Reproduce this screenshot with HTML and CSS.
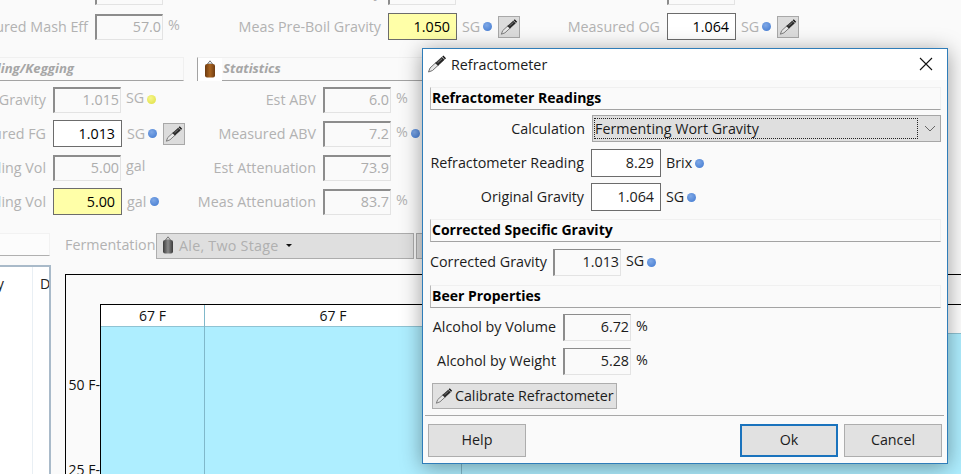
FILE: index.html
```html
<!DOCTYPE html>
<html lang="en">
<head>
<meta charset="utf-8">
<title>Refractometer</title>
<link rel="stylesheet" href="styles.css">
</head>
<body>
<svg class="defs" width="0" height="0" aria-hidden="true">
  <symbol id="refract" viewBox="0 0 20 20">
    <path d="M1.5 18 L3 14 L9 8.5 L11.5 11 L5.5 16.5 Z" fill="#e8e8e8" stroke="#707070" stroke-width="1"/>
    <path d="M8.5 9 L14.8 3.2 L17.3 5.7 L11 11.5 Z" fill="#262626" stroke="#111" stroke-width=".5"/>
    <path d="M10.5 8.8 L15 4.8" stroke="#8e8e8e" stroke-width=".9"/>
    <path d="M15.8 2 L18.5 4.7" stroke="#111" stroke-width="1.5"/>
  </symbol>
  <linearGradient id="brownfill" x1="0" x2="1" y1="0" y2="0">
    <stop offset="0" stop-color="#6b3a10"/><stop offset=".5" stop-color="#a96420"/><stop offset="1" stop-color="#6f3c12"/>
  </linearGradient>
  <linearGradient id="greyfill" x1="0" x2="1" y1="0" y2="0">
    <stop offset="0" stop-color="#3c3c3c"/><stop offset=".5" stop-color="#8a8a8a"/><stop offset="1" stop-color="#3c3c3c"/>
  </linearGradient>
  <symbol id="vessel" viewBox="0 0 12 18">
    <path d="M6 .8 L8.5 4 H3.5 Z" fill="none" stroke="#777" stroke-width="1"/>
    <rect x="1" y="4" width="10" height="13.5" rx="2"/>
  </symbol>
</svg>

<div class="app">
  <div class="bg">
    <div class="row-3">
      <div class="field"><span class="lab w88"></span><span class="inp off"></span></div>
      <div class="field"><span class="lab w81">Gravity</span><span class="inp off"></span></div>
      <div class="field"><span class="lab w81"></span><span class="inp off"></span></div>
    </div>
    <div class="row-3 row-second">
      <div class="field"><span class="lab w88">Measured Mash Eff</span><span class="inp off">57.0</span><span class="unit up">%</span></div>
      <div class="field"><span class="lab w81">Meas Pre-Boil Gravity</span><span class="inp on yellow">1.050</span><span class="unit">SG</span><i class="dot blue"></i><span class="tool"><svg class="ic18"><use href="#refract"/></svg></span></div>
      <div class="field"><span class="lab w81">Measured OG</span><span class="inp on">1.064</span><span class="unit">SG</span><i class="dot blue"></i><span class="tool"><svg class="ic18"><use href="#refract"/></svg></span></div>
    </div>

    <div class="stats">
      <div class="bg-head head-left">Bottling/Kegging</div>
      <div class="bg-head head-right"><span class="head-icon"><svg class="vessel-ic brown"><use href="#vessel"/></svg></span>Statistics</div>

      <div class="field"><span class="lab w46">Final Gravity</span><span class="inp off">1.015</span><span class="unit up">SG</span><i class="dot yellowdot"></i></div>
      <div class="field"><span class="lab w119">Est ABV</span><span class="inp off">6.0</span><span class="unit up">%</span></div>

      <div class="field"><span class="lab w46">Measured FG</span><span class="inp on">1.013</span><span class="unit">SG</span><i class="dot blue"></i><span class="tool"><svg class="ic18"><use href="#refract"/></svg></span></div>
      <div class="field"><span class="lab w119">Measured ABV</span><span class="inp off">7.2</span><span class="unit up">%</span><i class="dot blue"></i></div>

      <div class="field"><span class="lab w46">Est Bottling Vol</span><span class="inp off">5.00</span><span class="unit up">gal</span></div>
      <div class="field"><span class="lab w119">Est Attenuation</span><span class="inp off">73.9</span></div>

      <div class="field"><span class="lab w46">Bottling Vol</span><span class="inp on yellow">5.00</span><span class="unit">gal</span><i class="dot blue wide"></i></div>
      <div class="field"><span class="lab w119">Meas Attenuation</span><span class="inp off">83.7</span><span class="unit up">%</span></div>
    </div>

    <div class="ferm-row">
      <div class="stub"></div>
      <span class="ferm-label">Fermentation</span>
      <div class="ferm-select"><svg class="vessel-ic grey"><use href="#vessel"/></svg><span class="ferm-text">Ale, Two Stage</span><i class="caret"></i></div>
      <div class="ferm-btn"></div>
    </div>

    <div class="lower">
      <div class="table-stub">
        <div class="tcell c1"><span>Day</span></div>
        <div class="tcell c2">D</div>
      </div>
      <div class="chart">
        <div class="gutter"><div class="tick">50 F-</div><div class="tick">25 F-</div></div>
        <div class="plot">
          <div class="seg s1"><div class="seg-label">67 F</div><div class="seg-fill"></div></div>
          <div class="seg s2"><div class="seg-label">67 F</div><div class="seg-fill"></div></div>
          <div class="seg s3"><div class="seg-label tall"></div><div class="seg-fill"></div></div>
        </div>
      </div>
    </div>
  </div>

  <div class="dialog">
    <div class="titlebar">
      <svg class="ic20"><use href="#refract"/></svg>
      <span class="title">Refractometer</span>
      <svg class="close" viewBox="0 0 14 14"><path d="M1 1 L13 13 M13 1 L1 13" stroke="#111" stroke-width="1.1" fill="none"/></svg>
    </div>
    <div class="dbody">
      <div class="dhead">Refractometer Readings</div>
      <div class="drow calc-row">
        <span class="dlab w162">Calculation</span>
        <div class="dselect"><span class="focus">Fermenting Wort Gravity</span>
          <svg class="chev" viewBox="0 0 12 7"><path d="M1 1 L6 6 L11 1" fill="none" stroke="#666" stroke-width="1"/></svg>
        </div>
      </div>
      <div class="drow read-row">
        <span class="dlab w161">Refractometer Reading</span><span class="dinp">8.29</span><span class="dunit">Brix</span><i class="dot blue"></i>
      </div>
      <div class="drow og-row">
        <span class="dlab w161">Original Gravity</span><span class="dinp">1.064</span><span class="dunit">SG</span><i class="dot blue"></i>
      </div>
      <div class="dhead head2">Corrected Specific Gravity</div>
      <div class="drow corr-row">
        <span class="dlab w123">Corrected Gravity</span><span class="dinp sunk">1.013</span><span class="dunit up">SG</span><i class="dot blue"></i>
      </div>
      <div class="dhead head3">Beer Properties</div>
      <div class="drow abv-row">
        <span class="dlab w133">Alcohol by Volume</span><span class="dinp sunk">6.72</span><span class="dunit up">%</span>
      </div>
      <div class="drow abw-row">
        <span class="dlab w133">Alcohol by Weight</span><span class="dinp sunk">5.28</span><span class="dunit up">%</span>
      </div>
      <div class="calib"><svg class="ic18 calib-ic"><use href="#refract"/></svg>Calibrate Refractometer</div>
    </div>
    <div class="dfoot">
      <div class="btn">Help</div>
      <div class="spacer"></div>
      <div class="btn primary">Ok</div>
      <div class="btn">Cancel</div>
    </div>
  </div>
</div>
</body>
</html>
```

FILE: styles.css
```css
* { box-sizing: border-box; }
html, body { margin: 0; padding: 0; }
body { width: 961px; height: 474px; overflow: hidden; background: #fafafa; font-family: "Open Sans", "Noto Sans", "Liberation Sans", sans-serif; font-size: 14.3px; }
.defs { position: absolute; }
.app { position: relative; width: 961px; height: 474px; overflow: hidden; background: #fafafa; }
.bg { display: flex; flex-direction: column; margin-top: -22px; color: #b2b2b2; }

.row-3 { display: grid; grid-template-columns: 300px 279px 1fr; height: 27px; }
.row-second { margin-top: 8px; }
.field { display: flex; align-items: center; height: 27px; white-space: nowrap; }
.lab { display: flex; justify-content: flex-end; flex: none; margin-right: 7px; }
.w88 { width: 88px; }
.w81 { width: 81px; }
.w46 { width: 46px; }
.w119 { width: 119px; }
.inp { flex: none; width: 68px; height: 26px; line-height: 24px; text-align: right; }
.off { border-style: solid; border-width: 2px 1px 1px 2px; border-color: #8c8c8c #e3e3e3 #e3e3e3 #8c8c8c; padding-right: 1px; color: #adadad; line-height: 22px; }
.on { width: 69px; height: 27px; border: 1px solid #6c6c6c; background: #fff; color: #000; padding-right: 6px; line-height: 25px; }
.yellow { background: #ffffa8; }
.unit { margin-left: 5px; }
.unit.up { position: relative; top: -2px; }
.dot { flex: none; display: block; width: 9px; height: 9px; border-radius: 50%; margin-left: 3px; }
.blue { background: radial-gradient(circle at 40% 35%, #7fa8e6, #3f78d0); }
.yellowdot { background: radial-gradient(circle at 40% 35%, #f6f68a, #dede40); }
.dot.wide { margin-left: 4px; }
.tool { flex: none; display: flex; align-items: center; justify-content: center; width: 22px; height: 22px; margin-left: 6px; background: #dcdcdc; border: 1px solid #a8a8a8; }
.ic18 { width: 18px; height: 18px; display: block; }
.ic20 { width: 20px; height: 20px; display: block; }

.stats { display: grid; grid-template-columns: 197px 1fr; grid-template-rows: 22px repeat(4, 27px); row-gap: 7px; margin-top: 17px; }
.bg-head { display: flex; align-items: center; font-weight: 700; font-style: italic; font-size: 13.2px; color: #a6a6a6; border-bottom: 1px solid #a3a3a3; border-top: 1px solid #f0f0f0; height: 24px; padding-bottom: 3px; white-space: nowrap; }
.head-left { width: 184px; justify-content: flex-end; border-right: 1px solid #f0f0f0; padding-right: 109px; }
.head-right { width: 600px; border-left: 1px solid #a3a3a3; }
.head-icon { display: flex; align-items: center; justify-content: center; width: 24px; height: 23px; margin: 3px 1px 0 0; background: #fff; }
.vessel-ic { width: 12px; height: 18px; display: block; flex: none; }
.brown { fill: url(#brownfill); }
.grey { fill: url(#greyfill); }

.ferm-row { display: flex; align-items: flex-start; margin-top: 18px; height: 26px; }
.stub { width: 50px; height: 23px; border-bottom: 1px solid #b0b0b0; border-top: 1px solid #f2f2f2; border-right: 1px solid #f2f2f2; background: #fcfcfc; }
.ferm-label { margin-left: 15px; width: 91px; line-height: 24px; white-space: nowrap; }
.ferm-select { display: flex; align-items: center; width: 258px; height: 26px; background: #dfdfdf; border: 1px solid #adadad; padding: 0 0 2px 5px; gap: 5px; color: #b0b0b0; white-space: nowrap; }
.ferm-text { letter-spacing: .25px; }
.caret { display: block; width: 0; height: 0; border-style: solid; border-width: 3px 3px 0; border-color: #111 transparent transparent; margin-left: 2px; }
.ferm-btn { width: 24px; height: 26px; margin-left: 2px; background: #dfdfdf; border: 1px solid #adadad; }

.lower { display: flex; align-items: flex-start; margin-top: 6px; height: 220px; }
.table-stub { display: flex; flex: none; width: 51px; height: 220px; background: #fff; border-top: 2px solid #a9bac9; border-right: 2px solid #a9bac9; color: #222; }
.tcell { height: 100%; }
.c1 { display: flex; justify-content: flex-end; width: 33px; padding: 7px 28px 0 0; border-right: 1px solid #e9eff4; height: 100%; white-space: nowrap; }
.c1 span { display: block; }
.c2 { padding: 7px 0 0 7px; overflow: hidden; flex: 1; }

.chart { display: flex; flex: none; width: 920px; margin: 9px 0 0 14px; height: 220px; border: 1px solid #000; border-width: 1px 0 0 1px; padding-top: 29px; background: #fafafa; color: #111; }
.gutter { flex: none; width: 34px; padding-top: 38px; font-size: 14px; text-align: right; }
.tick { height: 85px; line-height: 85px; white-space: nowrap; }
.plot { display: flex; flex: 1; border-top: 1px solid #000; border-left: 1px solid #000; background: #fff; }
.seg { display: flex; flex-direction: column; }
.s1 { width: 103px; }
.s2 { width: 257px; border-left: 1px solid #80b8ca; }
.s3 { flex: 1; border-left: 1px solid #80b8ca; }
.seg-label { height: 22px; line-height: 21px; text-align: center; font-size: 14px; border-bottom: 1px solid #8fc3d3; }
.seg-label.tall { height: 29px; }
.seg-fill { flex: 1; background: #aeeeff; }

.dialog { position: absolute; left: 422px; top: 48px; width: 526px; height: 416px; display: flex; flex-direction: column; background: #fafafa; border: 1px solid #2f7db9; box-shadow: 0 3px 20px rgba(0,0,0,.38); color: #1c1c1c; }
.titlebar { display: flex; align-items: center; flex: none; height: 31px; padding-bottom: 1px; background: #fff; padding-left: 4px; }
.title { margin-left: 4px; white-space: nowrap; }
.close { width: 14px; height: 14px; margin-left: auto; margin-right: 14px; display: block; }
.dbody { flex: 1; display: flex; flex-direction: column; padding: 7px 6px 0 7px; white-space: nowrap; }
.dhead { flex: none; height: 23px; font-size: 14px; font-weight: 700; color: #000; line-height: 19px; padding-left: 1px; border: 1px solid #f0f0f0; border-bottom: 1px solid #a3a3a3; border-left: 1px solid #b8b8b8; }
.head2 { margin-top: 8px; }
.head3 { margin-top: 9px; }
.drow { display: flex; align-items: center; flex: none; }
.dlab { display: block; flex: none; text-align: right; margin-right: 7px; padding-bottom: 2px; }
.calc-row .dlab { padding-bottom: 0; }
.w162 { width: 155px; }
.w161 { width: 154px; }
.w123 { width: 116px; }
.w133 { width: 126px; }
.calc-row { margin-top: 5px; height: 27px; }
.read-row { margin-top: 7px; height: 28px; }
.og-row { margin-top: 6px; height: 28px; }
.corr-row { margin-top: 7px; height: 27px; }
.abv-row { margin-top: 6px; height: 27px; }
.abw-row { margin-top: 7px; height: 27px; }
.dselect { position: relative; flex: none; display: flex; align-items: center; width: 349px; height: 27px; background: #dfdfdf; border: 1px solid #a6a6a6; padding: 2px 2px 2px 1px; }
.focus { display: flex; align-items: center; width: 324px; height: 100%; border: 1px dotted #222; padding-left: 0; padding-bottom: 1px; }
.chev { position: absolute; right: 4px; top: 9px; width: 12px; height: 7px; }
.dinp { flex: none; width: 70px; height: 28px; line-height: 25px; text-align: right; background: #fff; border: 1px solid #6c6c6c; padding-right: 6px; }
.dinp.sunk { width: 68px; height: 27px; background: transparent; border-style: solid; border-color: #8c8c8c #e3e3e3 #e3e3e3 #8c8c8c; border-width: 1px 1px 1px 2px; line-height: 23px; padding-right: 1px; }
.dunit { margin-left: 5px; padding-bottom: 2px; }
.dunit.up { position: relative; top: -2px; padding-bottom: 0; }
.calib { display: flex; align-items: center; flex: none; width: 185px; height: 26px; margin: 8px 0 0 2px; background: #e1e1e1; border: 1px solid #adadad; padding: 0 0 1px 2px; letter-spacing: -.05px; }
.calib-ic { margin-right: 2px; }
.dfoot { display: flex; flex: none; height: 48px; margin: 0 3px 0 2px; border-top: 1px solid #a8a8a8; padding: 8px 2px 0 3px; gap: 6px; }
.spacer { flex: 1; }
.btn { width: 98px; height: 33px; line-height: 30px; text-align: center; background: #e1e1e1; border: 1px solid #adadad; }
.btn.primary { border: 2px solid #1a73bd; line-height: 28px; }
```
